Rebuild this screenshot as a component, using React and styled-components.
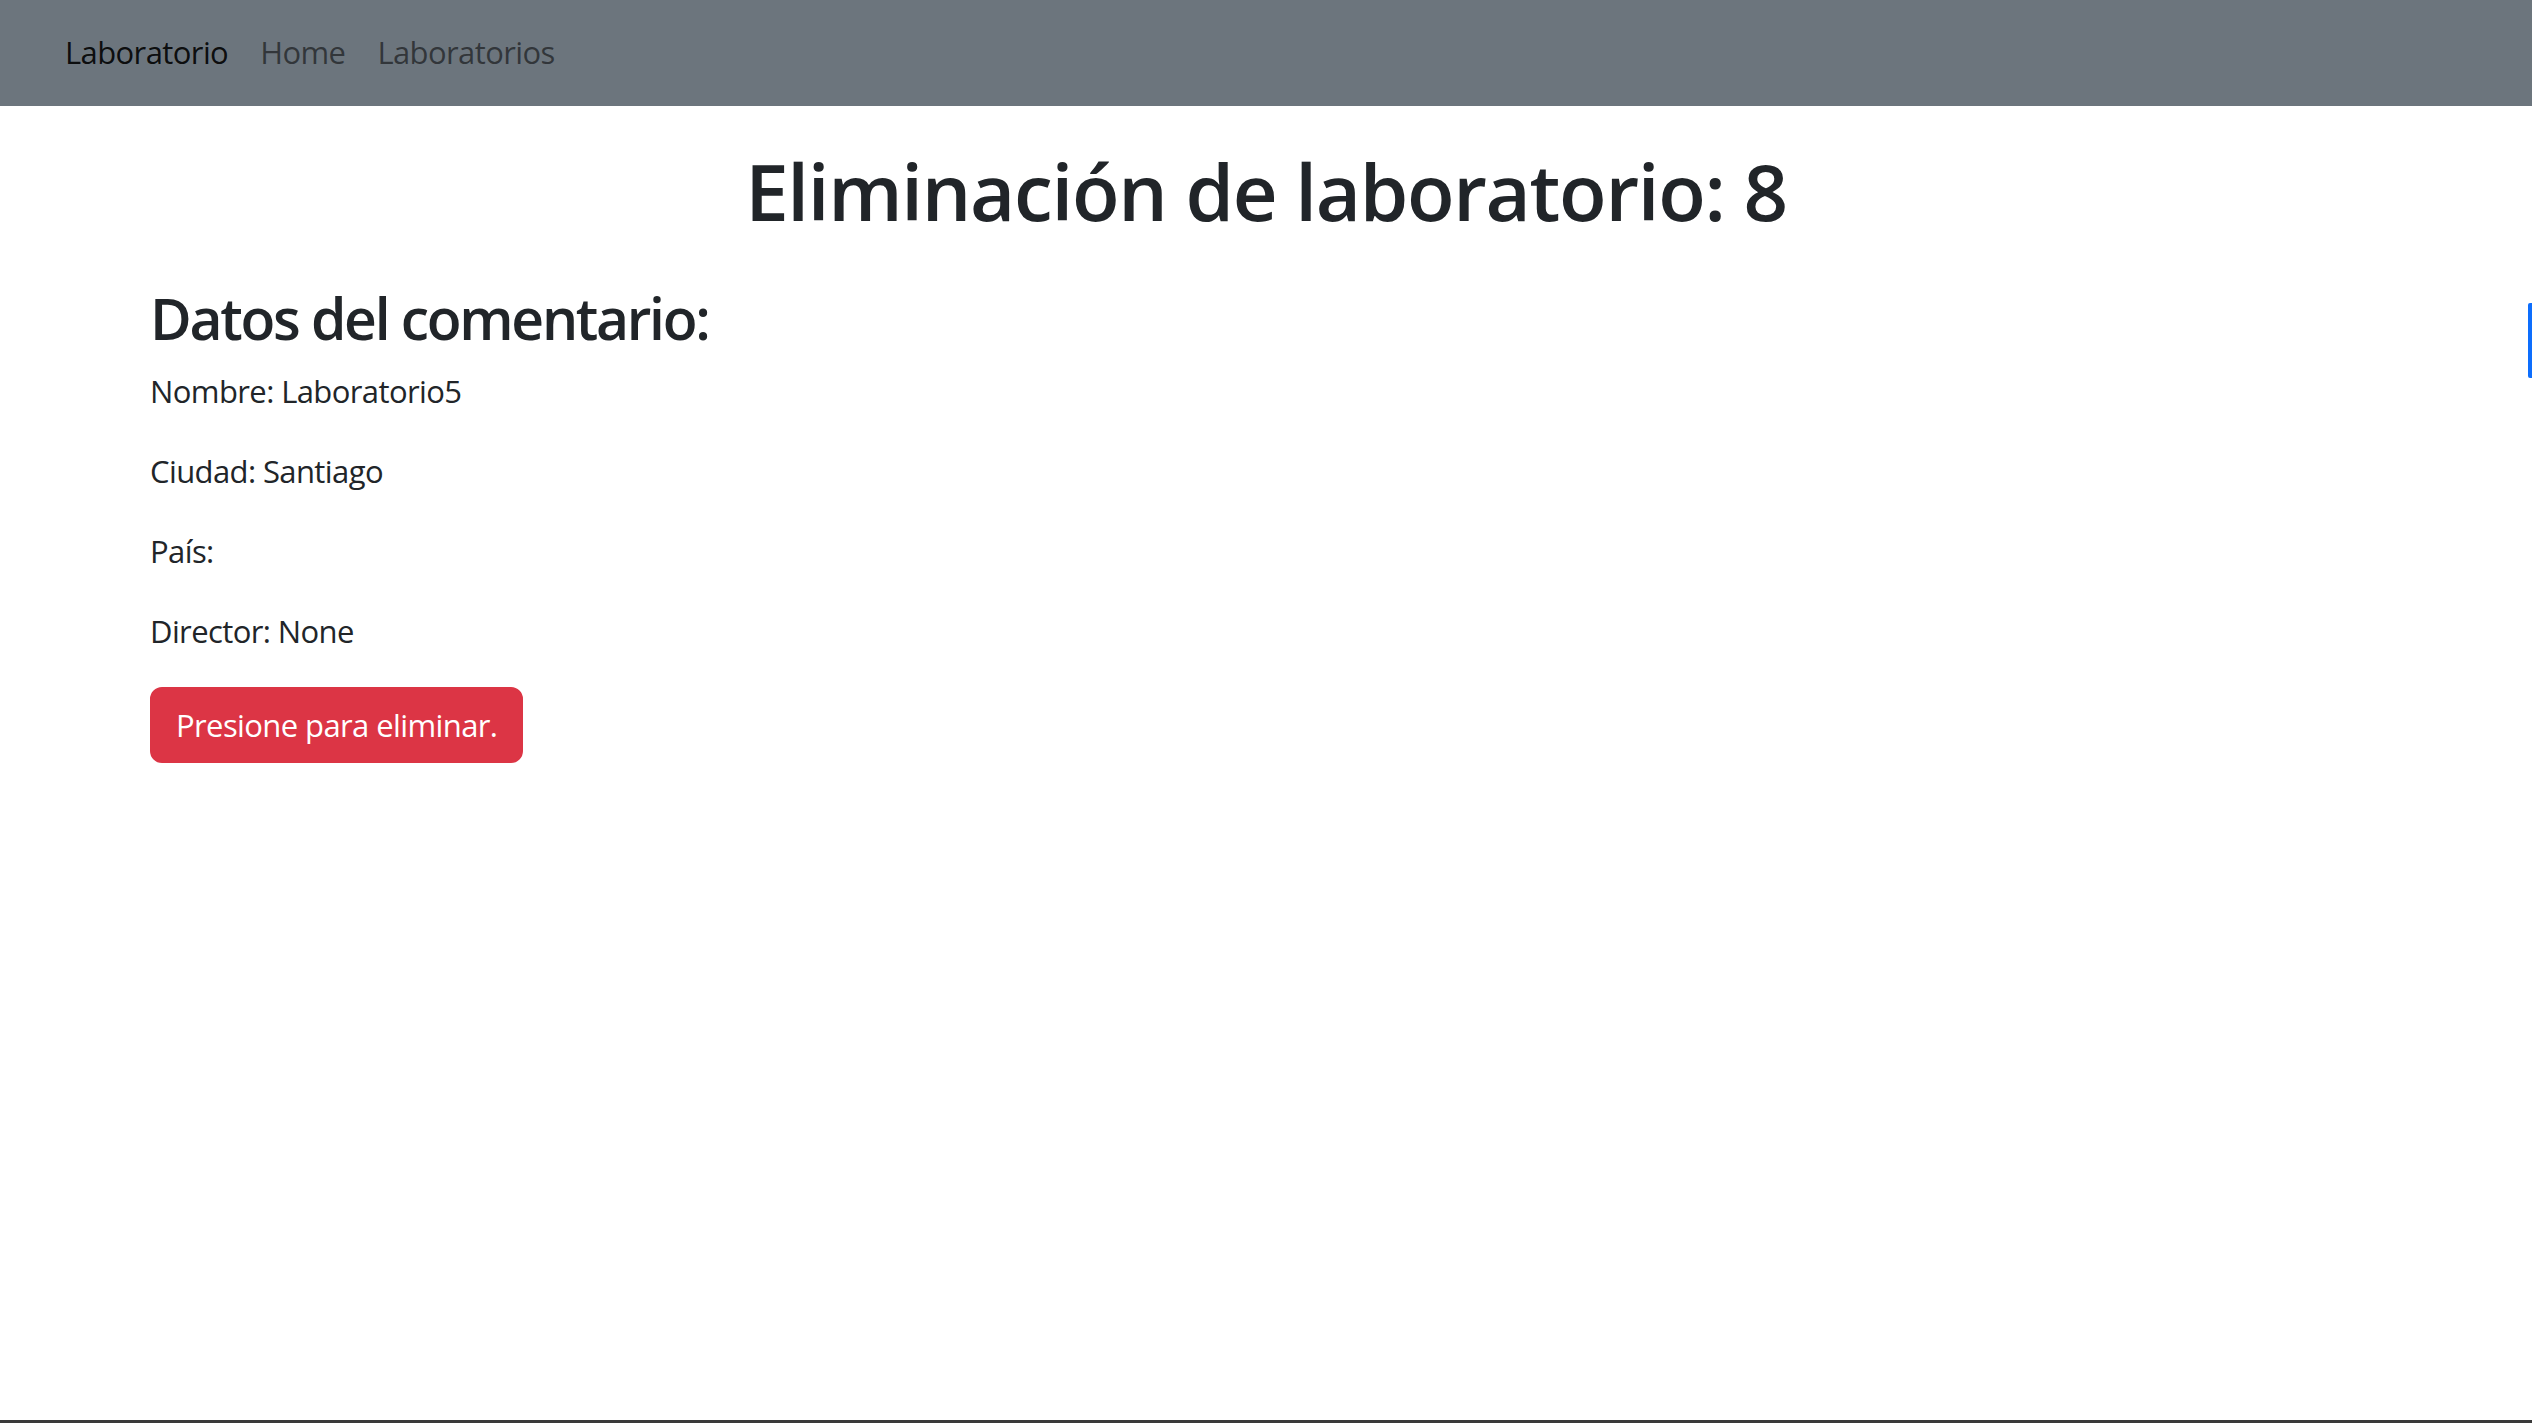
import React from "react";
import styled, { createGlobalStyle } from "styled-components";

const GlobalStyle = createGlobalStyle`
  html, body {
    margin: 0;
    padding: 0;
    background: #ffffff;
  }
  body {
    font-family: "Open Sans", "Noto Sans", "Liberation Sans", sans-serif;
    color: #212529;
  }
  * {
    box-sizing: border-box;
  }
`;

const Page = styled.div`
  min-height: 1423px;
  display: flex;
  flex-direction: column;
  border-bottom: 3px solid #3a3a3a;
  position: relative;
`;

const NavBar = styled.nav`
  height: 106px;
  background-color: #6c757d;
  display: flex;
  align-items: center;
  padding: 0 65px 2px;
`;

const Brand = styled.a`
  font-size: 31px;
  color: rgba(0, 0, 0, 0.9);
  text-decoration: none;
  margin-right: 16px;
  letter-spacing: -0.6px;
`;

const NavLink = styled.a`
  font-size: 31px;
  color: rgba(0, 0, 0, 0.55);
  text-decoration: none;
  padding: 0 16px;
  letter-spacing: -0.6px;
`;

const Main = styled.main`
  flex: 1;
`;

const Title = styled.h1`
  margin: 37px 0 41px;
  font-size: 78px;
  font-weight: 600;
  line-height: 96px;
  text-align: center;
  letter-spacing: -1.3px;
`;

const Container = styled.div`
  width: 2280px;
  margin: 0 auto;
  padding: 0 24px;
`;

const SubTitle = styled.h2`
  margin: 0 0 10px;
  font-size: 57px;
  font-weight: 600;
  line-height: 77px;
  letter-spacing: -2.3px;
`;

const Field = styled.p`
  margin: 0 0 32px;
  font-size: 31px;
  line-height: 48px;
  letter-spacing: -0.6px;
`;

const DeleteButton = styled.button`
  font-family: inherit;
  font-size: 31px;
  line-height: 48px;
  letter-spacing: -0.6px;
  color: #ffffff;
  background-color: #dc3545;
  border: 2px solid #dc3545;
  border-radius: 12px;
  padding: 12px 24px;
  cursor: pointer;
`;

const EdgeMark = styled.div`
  position: absolute;
  right: 0;
  top: 303px;
  width: 4px;
  height: 75px;
  background: #0d6efd;
  border-radius: 2px 0 0 2px;
`;

export default function App() {
  const fields = [
    ["Nombre", "Laboratorio5"],
    ["Ciudad", "Santiago"],
    ["País", ""],
    ["Director", "None"],
  ];

  return (
    <>
      <GlobalStyle />
      <Page>
        <NavBar>
          <Brand href="#">Laboratorio</Brand>
          <NavLink href="#">Home</NavLink>
          <NavLink href="#">Laboratorios</NavLink>
        </NavBar>
        <Main>
          <Title>Eliminación de laboratorio: 8</Title>
          <Container>
            <SubTitle>Datos del comentario:</SubTitle>
            {fields.map(([label, value]) => (
              <Field key={label}>
                {label}: {value}
              </Field>
            ))}
            <DeleteButton>Presione para eliminar.</DeleteButton>
          </Container>
        </Main>
        <EdgeMark />
      </Page>
    </>
  );
}
